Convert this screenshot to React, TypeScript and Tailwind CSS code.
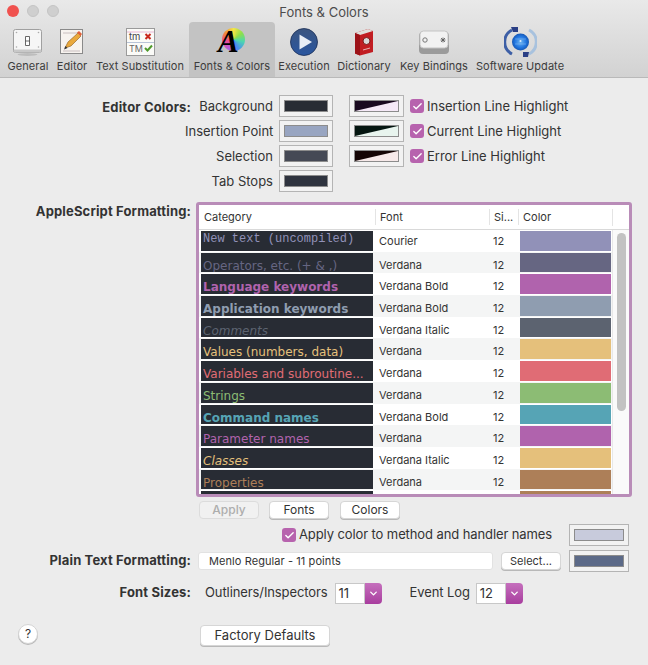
import { Check, ChevronDown } from 'lucide-react'
import type { ReactNode } from 'react'

const GeneralIcon = () => (
  <svg width="30" height="30" viewBox="0 0 30 30">
    <ellipse cx="14.500" cy="27.500" rx="10" ry="1.500" fill="#bdbdbd" />
    <rect x="0.500" y="2.500" width="28" height="23" rx="2" fill="#f6f6f6" stroke="#a0a0a0" />
    <rect x="1" y="22.500" width="27" height="3" fill="#c8c8c8" />
    <circle cx="3.500" cy="5.500" r="0.800" fill="#aaa" />
    <circle cx="25.500" cy="5.500" r="0.800" fill="#aaa" />
    <circle cx="3.500" cy="20" r="0.800" fill="#aaa" />
    <circle cx="25.500" cy="20" r="0.800" fill="#aaa" />
    <path d="M12.500 9.500h4v9h-4zM12.500 14h4" fill="#fff" stroke="#444" strokeWidth="0.800" />
  </svg>
)

const EditorIcon = () => (
  <svg width="26" height="28" viewBox="0 0 26 28">
    <rect x="1.500" y="1.500" width="22" height="24" fill="#f7f3ef" stroke="#8a8a8a" />
    <path d="M4 5h17M4 23h17" stroke="#c9bfc0" strokeWidth="1" />
    <path d="M6 20l3-6L19 5l3 3-10 10z" fill="#eaa93c" stroke="#8a5a1c" strokeWidth="0.600" />
    <path d="M18 4.500l2-1.500 3 3-1.500 2z" fill="#e2603a" />
    <path d="M5 21.500l1.500-3.500 2 2z" fill="#333" />
  </svg>
)

const TextSubIcon = () => (
  <svg width="29" height="29" viewBox="0 0 29 29">
    <rect x="0.500" y="0.500" width="28" height="27" fill="#fbfbf8" stroke="#9a9a9a" />
    <path d="M1 4h27" stroke="#e8b7d5" />
    <path d="M1 14.500h27" stroke="#b8c4d8" />
    <text x="3" y="12" fontSize="9.500" fill="#444" fontFamily="Inter, sans-serif">tm</text>
    <text x="3" y="24" fontSize="9" fill="#666" fontFamily="Inter, sans-serif">TM</text>
    <path d="M19.500 6l5 5M24.500 6l-5 5" stroke="#c8261c" strokeWidth="2" />
    <path d="M19 20l2.500 2.500 4.500-5" stroke="#4f9a2c" strokeWidth="2" fill="none" />
  </svg>
)

const FontsIcon = () => (
  <div className="relative h-[28px] w-[26px]">
    <div className="absolute right-0 top-0 size-[23px] rounded-full bg-[conic-gradient(#f5e642,#8fe04a,#4cd6b0,#4a8cf0,#b060e0,#f04a90,#f08a3a,#f5e642)]" />
    <span className="absolute left-[-1px] top-[-3px] text-[31px] leading-[34px] font-bold italic text-black [font-family:'Liberation_Serif',serif]">A</span>
  </div>
)

const ExecutionIcon = () => (
  <svg width="28" height="28" viewBox="0 0 28 28">
    <defs>
      <linearGradient id="ex" x1="0" y1="0" x2="0" y2="1">
        <stop offset="0" stopColor="#3a5580" />
        <stop offset="1" stopColor="#2a56a0" />
      </linearGradient>
    </defs>
    <circle cx="14" cy="14" r="13.500" fill="url(#ex)" stroke="#1c2f55" strokeWidth="0.800" />
    <path d="M9.500 6.500L22 14 9.500 21.500z" fill="#e8eef6" />
  </svg>
)

const DictionaryIcon = () => (
  <svg width="20" height="28" viewBox="0 0 20 28">
    <path d="M1 5l13-4 5 2v21l-13 3.500-5-2z" fill="#c11d22" />
    <path d="M1 5l13-4 5 2-13 4z" fill="#e0e0dc" />
    <path d="M1 5l5 2v20.500l-5-2z" fill="#9c1218" />
    <circle cx="12.500" cy="13" r="3.500" fill="#d8d8d8" stroke="#7a1a1a" />
    <path d="M9 22l7-2" stroke="#e8b0b0" />
  </svg>
)

const KeyIcon = () => (
  <svg width="32" height="26" viewBox="0 0 32 26">
    <rect x="1" y="3" width="30" height="22" rx="4" fill="#9b9b9b" />
    <rect x="2" y="2" width="28" height="17" rx="3.500" fill="#f2f2f2" stroke="#c4c4c4" />
    <circle cx="7" cy="11" r="2.200" fill="none" stroke="#777" />
    <path d="M23 9l4 4M27 9l-4 4M25 8.500v5M22.500 11h5" stroke="#555" strokeWidth="0.800" />
  </svg>
)

const UpdateIcon = () => (
  <svg width="33" height="32" viewBox="0 0 33 32">
    <defs>
      <radialGradient id="gl" cx="0.500" cy="0.500" r="0.550">
        <stop offset="0" stopColor="#6db4f2" />
        <stop offset="0.600" stopColor="#2176e0" />
        <stop offset="1" stopColor="#134fa8" />
      </radialGradient>
    </defs>
    <path d="M8 4A13.500 13.500 0 0 0 8 28" fill="none" stroke="#3d5fa6" strokeWidth="3" />
    <path d="M25 4A13.500 13.500 0 0 1 25 28" fill="none" stroke="#a8c2de" strokeWidth="3" />
    <path d="M7 1h7v5H9z" fill="#2a3f85" />
    <path d="M19 26h6l-1 5h-5z" fill="#2a3f85" />
    <circle cx="16.500" cy="16" r="8.500" fill="url(#gl)" />
    <circle cx="16.500" cy="15" r="1" fill="#dcecfb" />
    <path d="M11 13h11M11 18h11" stroke="#a9d0f5" strokeWidth="0.400" />
  </svg>
)

const tabs: { label: string; width: string; icon: ReactNode; active?: boolean }[] = [
  { label: 'General', width: 'w-[50px]', icon: <GeneralIcon /> },
  { label: 'Editor', width: 'w-[38px]', icon: <EditorIcon /> },
  { label: 'Text Substitution', width: 'w-[98px]', icon: <TextSubIcon /> },
  { label: 'Fonts & Colors', width: 'w-[86px]', icon: <FontsIcon />, active: true },
  { label: 'Execution', width: 'w-[58px]', icon: <ExecutionIcon /> },
  { label: 'Dictionary', width: 'w-[62px]', icon: <DictionaryIcon /> },
  { label: 'Key Bindings', width: 'w-[78px]', icon: <KeyIcon /> },
  { label: 'Software Update', width: 'w-[94px]', icon: <UpdateIcon /> },
]

const rows = [
  { name: 'New text (uncompiled)', cls: "pt-px leading-[15px] text-[#9191b8] [font-family:'Liberation_Mono',monospace]", font: 'Courier', color: 'bg-[#9191b8]' },
  { name: 'Operators, etc. (+ & ,)', cls: 'pt-[7px] leading-[13px] text-[#666682]', font: 'Verdana', color: 'bg-[#666682]' },
  { name: 'Language keywords', cls: 'pt-[7px] leading-[13px] text-[#b063ad] font-bold', font: 'Verdana Bold', color: 'bg-[#b063ad]' },
  { name: 'Application keywords', cls: 'pt-[7px] leading-[13px] text-[#8f9db0] font-bold', font: 'Verdana Bold', color: 'bg-[#8f9db0]' },
  { name: 'Comments', cls: 'pt-[7px] leading-[13px] text-[#5c6370] italic', font: 'Verdana Italic', color: 'bg-[#5c6370]' },
  { name: 'Values (numbers, data)', cls: 'pt-[7px] leading-[13px] text-[#e5c07b]', font: 'Verdana', color: 'bg-[#e5c07b]' },
  { name: 'Variables and subroutine...', cls: 'pt-[7px] leading-[13px] text-[#e06c75]', font: 'Verdana', color: 'bg-[#e06c75]' },
  { name: 'Strings', cls: 'pt-[7px] leading-[13px] text-[#8cbc74]', font: 'Verdana', color: 'bg-[#8cbc74]' },
  { name: 'Command names', cls: 'pt-[7px] leading-[13px] text-[#56a4b5] font-bold', font: 'Verdana Bold', color: 'bg-[#56a4b5]' },
  { name: 'Parameter names', cls: 'pt-[7px] leading-[13px] text-[#b063ad]', font: 'Verdana', color: 'bg-[#b063ad]' },
  { name: 'Classes', cls: 'pt-[7px] leading-[13px] text-[#e5c07b] italic', font: 'Verdana Italic', color: 'bg-[#e5c07b]' },
  { name: 'Properties', cls: 'pt-[7px] leading-[13px] text-[#ad7f58]', font: 'Verdana', color: 'bg-[#ad7f58]' },
  { name: '', cls: '', font: '', color: 'bg-[#ad7f58]' },
]

const Swatch = ({ color, wide }: { color: string; wide?: boolean }) => (
  <div className={`h-[22px] ${wide ? 'w-[60px]' : 'w-[54px]'} shrink-0 border border-[#b4b4b4] bg-[#f2f2f2] p-[4px]`}>
    <div className={`size-full border border-[#8c8c8c] ${color}`} />
  </div>
)

const SplitSwatch = ({ dark, light }: { dark: string; light: string }) => (
  <div className="h-[22px] w-[55px] shrink-0 border border-[#b4b4b4] bg-[#f2f2f2] p-[4px]">
    <svg className="block size-full border border-[#8c8c8c]" viewBox="0 0 44 12" preserveAspectRatio="none">
      <rect width="44" height="12" fill={light} />
      <path d="M0 0H44L0 12z" fill={dark} />
    </svg>
  </div>
)

const Checkbox = () => (
  <div className="flex size-[14px] shrink-0 items-center justify-center rounded-[3px] bg-[#b763ae]">
    <Check className="size-[11px] text-white" strokeWidth={3} />
  </div>
)

const Button = ({ children, width, disabled }: { children: ReactNode; width: string; disabled?: boolean }) => (
  <div className={`flex items-center justify-center rounded-[4px] border shadow-[0_1px_0_#b8b8b8] ${width} ${disabled ? 'border-[#dcdcdc] bg-[#f1f1f1] font-medium text-[#adadad] shadow-none' : 'border-[#d6d6d6] bg-white text-[#333]'}`}>
    {children}
  </div>
)

const Dropdown = ({ value }: { value: string }) => (
  <div className="flex h-[21px] w-[47px] items-stretch">
    <div className="flex-1 border border-[#c8c8c8] bg-white pl-[3px] text-[13px] leading-[19px]">{value}</div>
    <div className="flex w-[17px] items-center justify-center rounded-r-[4px] bg-gradient-to-b from-[#c56fbd] to-[#a83d9e]">
      <ChevronDown className="size-[11px] text-white" strokeWidth={3} />
    </div>
  </div>
)

const Label = ({ children }: { children: ReactNode }) => (
  <div className="w-[191px] shrink-0 text-right font-bold tracking-[0.15px] whitespace-nowrap">{children}</div>
)

const colorRows = [
  { label: 'Background', color: 'bg-[#282c34]', dark: '#1a0a20', light: '#f5e9f7', check: 'Insertion Line Highlight' },
  { label: 'Insertion Point', color: 'bg-[#98a5c1]', dark: '#041510', light: '#e8f4ee', check: 'Current Line Highlight' },
  { label: 'Selection', color: 'bg-[#454955]', dark: '#150505', light: '#f6e9e9', check: 'Error Line Highlight' },
  { label: 'Tab Stops', color: 'bg-[#2f343f]' },
]

export default function App() {
  return (
    <div className="h-[665px] w-[648px] overflow-hidden bg-[#ececec] text-[13px] text-[#333] [font-family:Inter,sans-serif]">
      <header className="h-[78px] border-b border-[#b9b9b9] bg-gradient-to-b from-[#e9e9e9] to-[#d2d2d2]">
        <div className="grid h-[22px] grid-cols-[1fr_auto_1fr] items-center px-[7px]">
          <div className="flex gap-[8px]">
            <div className="size-[12px] rounded-full bg-[#f0524f]" />
            <div className="size-[12px] rounded-full border border-[#c4c4c4] bg-[#cfcfcf]" />
            <div className="size-[12px] rounded-full border border-[#c4c4c4] bg-[#cfcfcf]" />
          </div>
          <div className="mt-[3px] text-[13px] text-[#4c4c4c]">Fonts &amp; Colors</div>
        </div>
        <nav className="flex h-[55px] pl-[3px]">
          {tabs.map((tab) => (
            <div key={tab.label} className={`flex shrink-0 flex-col items-center rounded-t-[4px] ${tab.width} ${tab.active ? 'bg-[#c3c3c3]' : ''}`}>
              <div className="flex h-[37px] items-center justify-center pt-[3px]">{tab.icon}</div>
              <div className="text-[11px] leading-[14px] tracking-[0.05px] whitespace-nowrap text-[#3c3c3c]">{tab.label}</div>
            </div>
          ))}
        </nav>
      </header>

      <main className="pt-[17px]">
        <section className="flex">
          <Label><div className="pt-px leading-[23px]">Editor Colors:</div></Label>
          <div className="-ml-[6px] flex flex-col gap-[3px]">
            {colorRows.map((row) => (
              <div key={row.label} className="flex h-[22px] items-center">
                <div className="w-[94px] pr-[6px] pt-[2px] text-right whitespace-nowrap">{row.label}</div>
                <Swatch color={row.color} />
                {row.check && (
                  <div className="ml-[16px] flex items-center">
                    <SplitSwatch dark={row.dark} light={row.light} />
                    <div className="ml-[6px]"><Checkbox /></div>
                    <div className="ml-[3px] pt-[2px] whitespace-nowrap">{row.check}</div>
                  </div>
                )}
              </div>
            ))}
          </div>
        </section>

        <section className="mt-[10px] flex">
          <Label><div className="leading-[18px]">AppleScript Formatting:</div></Label>
          <div className="ml-[5px] h-[295px] w-[436px] overflow-hidden rounded-[3px] border-[3px] border-[#b98cb8] bg-white text-[11px] text-[#333]">
            <div className="flex h-[25px] items-center border-b border-[#d9d9d9]">
              <div className="w-[176px] pl-[5px]">Category</div>
              <div className="w-[114px] border-l border-[#e4e4e4] pl-[4px]">Font</div>
              <div className="w-[29px] border-l border-[#e4e4e4] pl-[4px]">Si...</div>
              <div className="w-[94px] border-l border-[#e4e4e4] pl-[4px]">Color</div>
              <div className="h-[17px] flex-1 border-l border-[#e4e4e4]" />
            </div>
            <div className="flex">
              <div className="w-[413px] shrink-0">
                {rows.map((row, i) => (
                  <div key={i} className={`flex h-[21.7px] ${i % 2 ? 'bg-[#f4f5f5]' : 'bg-white'}`}>
                    <div className={`ml-[2px] mt-[1px] mb-[1px] w-[172px] overflow-hidden bg-[#282c34] pl-[2px] text-[12px] whitespace-nowrap [font-family:'DejaVu_Sans',sans-serif] ${row.cls}`}>
                      {row.name}
                    </div>
                    <div className={`w-[120px] pl-[6px] leading-[21px] ${i === 0 ? 'pt-px' : 'pt-[3px]'}`}>{row.font}</div>
                    <div className={`w-[27px] leading-[21px] ${i === 0 ? 'pt-px' : 'pt-[3px]'}`}>{row.font ? '12' : ''}</div>
                    <div className={`mt-[1px] mb-[1px] w-[91px] ${row.color}`} />
                  </div>
                ))}
              </div>
              <div className="flex-1 border-l border-[#e8e8e8] bg-[#fafafa] pl-[4px] pt-[3px]">
                <div className="h-[178px] w-[9px] rounded-full bg-[#c2c2c2]" />
              </div>
            </div>
          </div>
        </section>

        <section className="mt-[4px] flex h-[18px] gap-[10px] pl-[199px] text-[12px]">
          <Button width="w-[60px]" disabled>Apply</Button>
          <Button width="w-[60px]">Fonts</Button>
          <div className="ml-px flex"><Button width="w-[60px]">Colors</Button></div>
        </section>

        <section className="mt-[5px] flex h-[22px] items-center pl-[282px]">
          <Checkbox />
          <div className="ml-[3px] w-[270px] tracking-[-0.1px] whitespace-nowrap">Apply color to method and handler names</div>
          <Swatch wide color="bg-[#c8cbdc]" />
        </section>

        <section className="mt-[4px] flex h-[22px] items-center">
          <Label>Plain Text Formatting:</Label>
          <div className="ml-[7px] flex h-[18px] w-[295px] items-center rounded-[3px] border border-[#e2e2e2] bg-white pl-[10px] text-[11px] tracking-[0.08px]">Menlo Regular - 11 points</div>
          <div className="ml-[8px] flex h-[18px]"><Button width="w-[60px]"><span className="text-[11px]">Select...</span></Button></div>
          <div className="ml-[8px]"><Swatch wide color="bg-[#5c6a88]" /></div>
        </section>

        <section className="mt-[10px] flex h-[22px] items-center">
          <Label>Font Sizes:</Label>
          <div className="ml-[14px] tracking-[-0.1px] whitespace-nowrap">Outliners/Inspectors</div>
          <div className="ml-[7px]"><Dropdown value="11" /></div>
          <div className="ml-[28px] tracking-[-0.1px] whitespace-nowrap">Event Log</div>
          <div className="ml-[6px]"><Dropdown value="12" /></div>
        </section>

        <section className="mt-[21px] flex h-[21px] items-center pl-[18px]">
          <div className="mb-[4px] flex size-[20px] items-center justify-center rounded-full border border-[#d4d4d4] bg-white text-[12px] shadow-[0_1px_0_#b8b8b8]">?</div>
          <div className="ml-[162px] flex h-[21px]"><Button width="w-[130px]"><span className="text-[13px]">Factory Defaults</span></Button></div>
        </section>
      </main>
    </div>
  )
}
